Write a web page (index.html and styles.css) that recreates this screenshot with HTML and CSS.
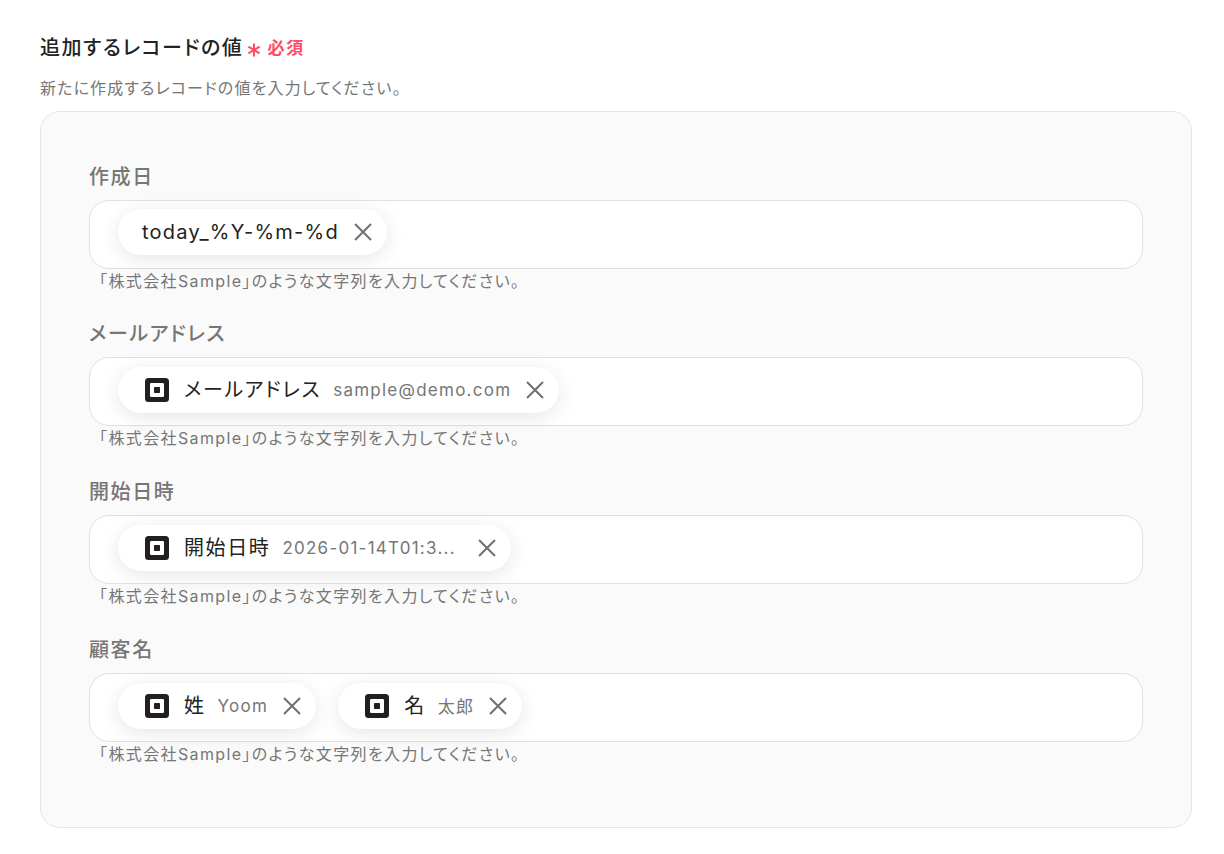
FILE: index.html
```html
<!DOCTYPE html>
<html lang="ja">
<head>
<meta charset="utf-8">
<title>追加するレコードの値</title>
<link rel="stylesheet" href="styles.css">
</head>
<body>
<svg class="defs" width="0" height="0" aria-hidden="true">
  <symbol id="square" viewBox="0 0 24 24">
    <path fill-rule="evenodd" fill="#231f20" d="M3.500 0h17a3.500 3.500 0 0 1 3.500 3.500v17a3.500 3.500 0 0 1-3.500 3.500h-17a3.500 3.500 0 0 1-3.500-3.500v-17a3.500 3.500 0 0 1 3.500-3.500zM6.200 5a1.200 1.200 0 0 0-1.200 1.200v11.600a1.200 1.200 0 0 0 1.200 1.200h11.600a1.200 1.200 0 0 0 1.200-1.200V6.200a1.200 1.200 0 0 0-1.200-1.200z"/>
    <rect x="9" y="9" width="6" height="6" rx=".7" fill="#231f20"/>
  </symbol>
  <symbol id="close" viewBox="0 0 20 20">
    <path d="M2 2l16 16M18 2L2 18" stroke="#6f6f6f" stroke-width="2" fill="none"/>
  </symbol>
</svg>
<main class="page">
  <div class="heading">
    <h1 class="title">追加するレコードの値</h1>
    <svg class="asterisk" viewBox="0 0 14 14" aria-hidden="true"><path d="M7 .5v13M1.400 3.700l11.200 6.600M12.600 3.700L1.400 10.300" stroke="#ff4d67" stroke-width="2" fill="none"/></svg>
    <span class="required">必須</span>
  </div>
  <p class="desc">新たに作成するレコードの値を入力してください。</p>
  <section class="panel">
    <div class="field">
      <div class="label">作成日</div>
      <div class="input">
        <span class="chip chip-plain"><span class="chip-name chip-mono">today_%Y-%m-%d</span><svg class="x"><use href="#close"/></svg></span>
      </div>
      <div class="hint">「株式会社Sample」のような文字列を入力してください。</div>
    </div>
    <div class="field">
      <div class="label">メールアドレス</div>
      <div class="input">
        <span class="chip"><svg class="app"><use href="#square"/></svg><span class="chip-name">メールアドレス</span><span class="chip-value">sample@demo.com</span><svg class="x"><use href="#close"/></svg></span>
      </div>
      <div class="hint">「株式会社Sample」のような文字列を入力してください。</div>
    </div>
    <div class="field">
      <div class="label">開始日時</div>
      <div class="input">
        <span class="chip"><svg class="app"><use href="#square"/></svg><span class="chip-name">開始日時</span><span class="chip-value chip-value-cut">2026-01-14T01:3...</span><svg class="x"><use href="#close"/></svg></span>
      </div>
      <div class="hint">「株式会社Sample」のような文字列を入力してください。</div>
    </div>
    <div class="field">
      <div class="label">顧客名</div>
      <div class="input">
        <span class="chip"><svg class="app"><use href="#square"/></svg><span class="chip-name">姓</span><span class="chip-value">Yoom</span><svg class="x"><use href="#close"/></svg></span>
        <span class="chip"><svg class="app"><use href="#square"/></svg><span class="chip-name">名</span><span class="chip-value">太郎</span><svg class="x"><use href="#close"/></svg></span>
      </div>
      <div class="hint">「株式会社Sample」のような文字列を入力してください。</div>
    </div>
  </section>
</main>
</body>
</html>
```
FILE: styles.css
```css
* { box-sizing: border-box; }
html, body { margin: 0; padding: 0; background: #fff; }
body {
  font-family: Inter, "Noto Sans CJK JP", sans-serif;
  font-feature-settings: "palt";
  color: #222;
  width: 1224px;
  height: 854px;
  overflow: hidden;
}
.defs { position: absolute; }
.page { padding: 32px 32px 0 40px; }
.heading { display: flex; align-items: center; height: 32px; }
.title { margin: 0; font-size: 20px; font-weight: 500; line-height: 32px; letter-spacing: 1.6px; color: #222; }
.asterisk { width: 14px; height: 14px; margin: 3px 6px 0 4px; flex: none; }
.required { font-size: 17px; font-weight: 700; line-height: 32px; height: 32px; letter-spacing: 1.8px; color: #ff4d67; }
.desc { margin: 12px 0 0; font-size: 16px; line-height: 24px; letter-spacing: 1.15px; color: #767676; height: 24px; }
.panel {
  margin-top: 11px;
  height: 717px;
  padding: 47.6px 48px 0;
  background: #fafafa;
  border: 1px solid #e4e4e7;
  border-radius: 20px;
}
.field { height: 157.75px; }
.label { font-size: 20px; font-weight: 500; line-height: 35.5px; height: 32px; letter-spacing: 1.6px; color: #767676; }
.input {
  display: flex;
  align-items: flex-start;
  gap: 22px;
  height: 69px;
  margin-top: 8px;
  padding: 8.7px 28px;
  background: #fff;
  border: 1px solid #e0e0e6;
  border-radius: 20px;
}
.chip {
  display: inline-flex;
  align-items: center;
  height: 46px;
  padding: 0 14px 0 27px;
  background: #fff;
  border-radius: 23px;
  box-shadow: 0 4px 20px rgba(0, 0, 0, .1);
}
.chip-plain { padding-left: 24px; }
.app { width: 24px; height: 24px; margin-right: 15px; flex: none; }
.chip-name { font-size: 20px; line-height: 32px; letter-spacing: 1.6px; color: #222; white-space: nowrap; }
.chip-mono { letter-spacing: 1.25px; }
.chip-value { margin-left: 12px; font-size: 17px; letter-spacing: 1.25px; color: #767676; white-space: nowrap; }
.chip-value-cut { padding-right: 7px; }
.x { width: 20px; height: 20px; margin-left: 14px; flex: none; }
.hint { margin-top: 0; padding-left: 10px; font-size: 16px; line-height: 24px; letter-spacing: 1.38px; color: #767676; }
```
